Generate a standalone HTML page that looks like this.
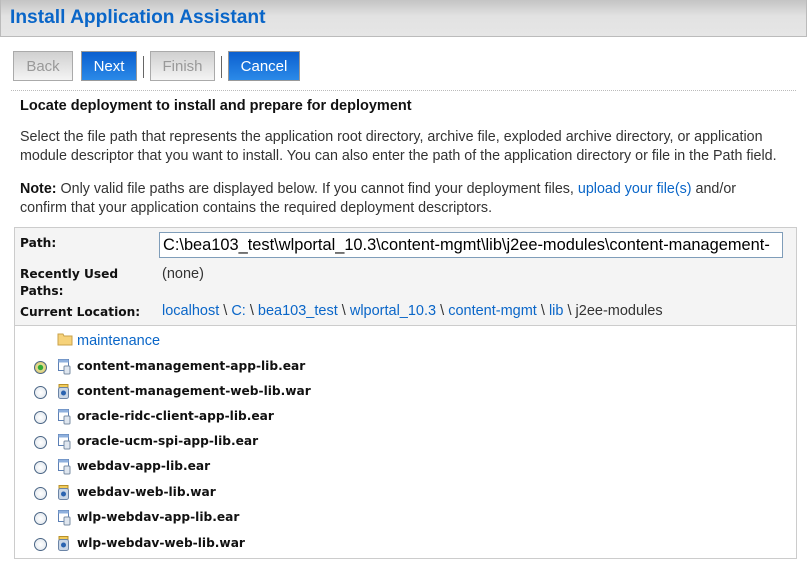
<!DOCTYPE html>
<html><head><style>
body{margin:0;width:807px;height:564px;background:#fff;font-family:"Liberation Sans",Arial,sans-serif;font-size:13px;color:#333;position:relative;overflow:hidden}
.a{position:absolute;white-space:nowrap}
.hdr{left:0;top:0;width:805px;height:36px;background:linear-gradient(#c4c4c4,#e2e2e2 45%,#e6e6e6);border:1px solid #bbb;border-top:none}
.t{left:10px;top:7px;font-size:19.2px;font-weight:bold;color:#0a66c8}
.b{top:51px;height:30px;line-height:30px;text-align:center;font-size:15px;border:1px solid #aaa;box-sizing:border-box}
.g{background:linear-gradient(#d0d0d0,#f4f4f4);color:#999}
.bl{background:linear-gradient(#0b5fcf,#2b8ae8);color:#fff;border-color:#999}
.sep{top:56px;width:1px;height:22px;background:#666}
.dj{font-family:"DejaVu Sans",Verdana,sans-serif;font-weight:bold;font-size:12.2px;color:#111}
a,.lk{color:#0a66c8;text-decoration:none}
.rad{width:11px;height:11px;border:1px solid #4a6585;border-radius:50%;background:radial-gradient(#fff,#dde3ea)}
</style></head><body>
<div class="a hdr"></div>
<div class="a t">Install Application Assistant</div>
<div class="a b g" style="left:13px;width:60px">Back</div>
<div class="a b bl" style="left:81px;width:56px">Next</div>
<div class="a sep" style="left:143px"></div>
<div class="a b g" style="left:150px;width:65px">Finish</div>
<div class="a sep" style="left:221px"></div>
<div class="a b bl" style="left:228px;width:72px">Cancel</div>
<div class="a" style="left:11px;top:90px;width:785px;border-top:1px dotted #bbb"></div>
<div class="a" style="left:20px;top:98px;font-weight:bold;color:#111;font-size:14.5px">Locate deployment to install and prepare for deployment</div>
<div class="a" style="left:20px;top:128px;line-height:19px;font-size:14.3px">Select the file path that represents the application root directory, archive file, exploded archive directory, or application<br>module descriptor that you want to install. You can also enter the path of the application directory or file in the Path field.</div>
<div class="a" style="left:20px;top:180px;line-height:19px;font-size:14.3px"><b style="color:#111">Note:</b> Only valid file paths are displayed below. If you cannot find your deployment files, <a>upload your file(s)</a> and/or<br>confirm that your application contains the required deployment descriptors.</div>
<div class="a" style="left:14px;top:227px;width:781px;height:330px;border:1px solid #ccc"></div>
<div class="a" style="left:15px;top:228px;width:781px;height:97px;background:#f4f4f4;border-bottom:1px solid #ccc"></div>
<div class="a dj" style="left:20px;top:236px">Path:</div>
<div class="a" style="left:159px;top:232px;width:624px;height:26px;border:1px solid #7f9db9;background:#fff;box-sizing:border-box;overflow:hidden;font-size:16.4px;line-height:24px;padding-left:3px;color:#000">C:\bea103_test\wlportal_10.3\content-mgmt\lib\j2ee-modules\content-management-</div>
<div class="a dj" style="left:20px;top:266px;line-height:17px">Recently Used<br>Paths:</div>
<div class="a" style="left:162px;top:266px;font-size:14.5px">(none)</div>
<div class="a dj" style="left:20px;top:305px">Current Location:</div>
<div class="a" style="left:162px;top:303px;font-size:14.5px"><a>localhost</a> \ <a>C:</a> \ <a>bea103_test</a> \ <a>wlportal_10.3</a> \ <a>content-mgmt</a> \ <a>lib</a> \ j2ee-modules</div>
<svg class="a" style="left:57px;top:332px" width="16" height="14"><path d="M1 2h5l1 2h8v9H1z" fill="#f6d27a" stroke="#c9a24a"/></svg>
<div class="a lk" style="left:77px;top:333px;font-size:14.5px">maintenance</div>
<div id="rows"></div>
<script>
var f=["content-management-app-lib.ear","content-management-web-lib.war","oracle-ridc-client-app-lib.ear","oracle-ucm-spi-app-lib.ear","webdav-app-lib.ear","webdav-web-lib.war","wlp-webdav-app-lib.ear","wlp-webdav-web-lib.war"];
var ys=[367,392,417,442,467,493,518,544],h="";
f.forEach(function(n,i){var y=ys[i];var ear=/ear$/.test(n);
h+='<div class="a rad" style="left:34px;top:'+(y-6)+'px;'+(i==0?'background:radial-gradient(#3a3 30%,#e8e0a0 40%,#c9b040);':'')+'"></div>';
h+=ear?'<svg class="a" style="left:58px;top:'+(y-8)+'px" width="14" height="16"><rect x="0.5" y="0.5" width="10" height="11" fill="#fff" stroke="#5b7fb5"/><rect x="0.5" y="0.5" width="10" height="3" fill="#8fb0dd"/><rect x="6" y="7" width="6" height="8" rx="1" fill="#dfe6ef" stroke="#7a8ca3"/></svg>'
:'<svg class="a" style="left:58px;top:'+(y-8)+'px" width="12" height="16"><rect x="1" y="0.5" width="9" height="3" fill="#f2cc5a" stroke="#b8902a"/><rect x="0.5" y="3.5" width="10" height="11" rx="2" fill="#c9d6e6" stroke="#6b84a6"/><circle cx="5.5" cy="9" r="2.5" fill="#2a63b0"/></svg>';
h+='<div class="a dj" style="left:77px;top:'+(y-8)+'px">'+n+'</div>';});
document.getElementById('rows').innerHTML=h;
</script>
</body></html>
